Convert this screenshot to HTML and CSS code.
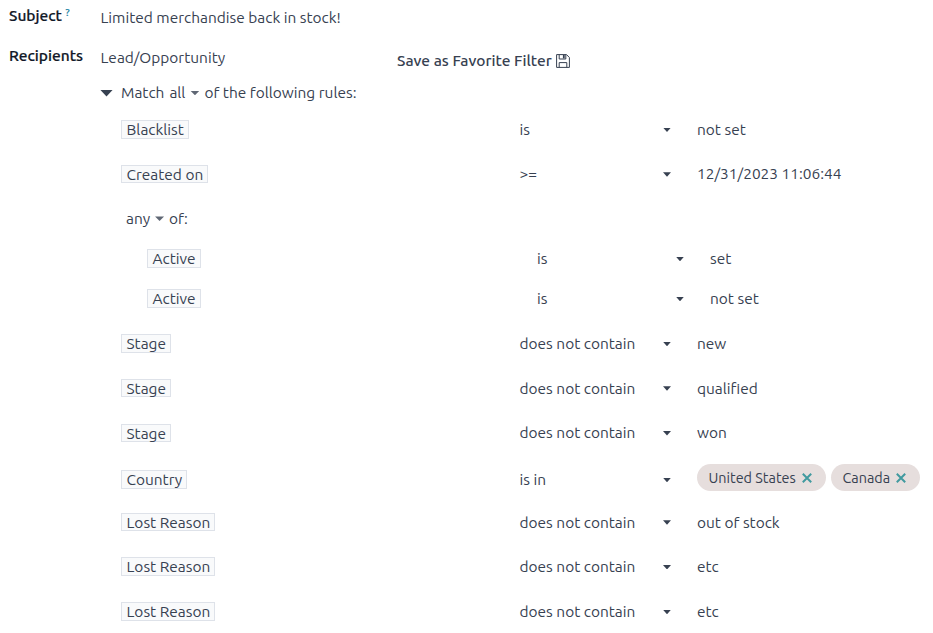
FILE: index.html
```html
<!DOCTYPE html>
<html lang="en">
<head>
<meta charset="utf-8">
<title>Mailing</title>
<link rel="stylesheet" href="styles.css">
</head>
<body>
<main class="form">
  <div class="field subject">
    <div class="label">Subject <sup class="help">?</sup></div>
    <div class="value">Limited merchandise back in stock!</div>
  </div>
  <div class="field recipients">
    <div class="label">Recipients</div>
    <div class="value">Lead/Opportunity</div>
    <div class="favorite"><span>Save as Favorite Filter</span>
      <svg class="floppy" viewBox="0 0 14 14" fill="none" stroke="currentColor"><path d="M.6 .6H10.5L13.4 3.5V13.4H.6ZM3.2 .6V5H9.8V.6M3.2 13.4V8.6H10.8V13.4"/><path d="M7.8 1V4.4" stroke-width="1.8"/></svg>
    </div>
  </div>
  <div class="match">
    <i class="caret big"></i><span>Match</span><span class="all">all</span><i class="caret mid"></i><span>of the following rules:</span>
  </div>
  <section class="rules">
    <div class="rule"><div class="path"><span class="chip">Blacklist</span></div><div class="op">is<i class="caret"></i></div><div class="val">not set</div></div>
    <div class="rule"><div class="path"><span class="chip">Created on</span></div><div class="op">&gt;=<i class="caret"></i></div><div class="val">12/31/2023 11:06:44</div></div>
    <div class="any">any<i class="caret mid"></i>of:</div>
    <div class="group">
      <div class="rule"><div class="path"><span class="chip">Active</span></div><div class="op">is<i class="caret"></i></div><div class="val">set</div></div>
      <div class="rule"><div class="path"><span class="chip">Active</span></div><div class="op">is<i class="caret"></i></div><div class="val">not set</div></div>
    </div>
    <div class="rule"><div class="path"><span class="chip">Stage</span></div><div class="op">does not contain<i class="caret"></i></div><div class="val">new</div></div>
    <div class="rule"><div class="path"><span class="chip">Stage</span></div><div class="op">does not contain<i class="caret"></i></div><div class="val">qualified</div></div>
    <div class="rule"><div class="path"><span class="chip">Stage</span></div><div class="op">does not contain<i class="caret"></i></div><div class="val">won</div></div>
    <div class="rule country"><div class="path"><span class="chip">Country</span></div><div class="op">is in<i class="caret"></i></div>
      <div class="val tags">
        <span class="tag us"><span>United States</span><svg class="x" viewBox="0 0 10 10"><path d="M.8 .8L9.2 9.2M9.2 .8L.8 9.2"/></svg></span>
        <span class="tag ca"><span>Canada</span><svg class="x" viewBox="0 0 10 10"><path d="M.8 .8L9.2 9.2M9.2 .8L.8 9.2"/></svg></span>
      </div>
    </div>
    <div class="rule"><div class="path"><span class="chip">Lost Reason</span></div><div class="op">does not contain<i class="caret"></i></div><div class="val">out of stock</div></div>
    <div class="rule"><div class="path"><span class="chip">Lost Reason</span></div><div class="op">does not contain<i class="caret"></i></div><div class="val">etc</div></div>
    <div class="rule"><div class="path"><span class="chip">Lost Reason</span></div><div class="op">does not contain<i class="caret"></i></div><div class="val">etc</div></div>
  </section>
</main>
</body>
</html>
```
FILE: styles.css
```css
* { box-sizing: border-box; }
body {
  margin: 0;
  background: #fff;
  color: #374151;
  font: 15.45px/20px Ubuntu, "Noto Sans", sans-serif;
  height: 633px;
  overflow: hidden;
}
.form { width: 933px; padding-left: 9px; }
.field { display: flex; height: 40px; }
.label { width: 91.5px; color: #111827; font-size: 15.5px; font-weight: 500; white-space: nowrap; -webkit-text-stroke: .2px; }
.subject { padding-top: 6px; }
.subject .value { padding-top: 2px; }
.recipients { padding-top: 6px; }
.recipients .value { width: 296.5px; padding-top: 2px; }
.help { font-size: 10px; line-height: 0; color: #2385a6; vertical-align: 5px; }
.favorite { display: flex; align-items: center; gap: 4px; height: 20px; margin-top: 5px; font-size: 15.5px; font-weight: 500; }
.floppy { width: 14px; height: 14px; }
.match { display: flex; align-items: center; height: 26px; margin-bottom: 1px; padding-left: 91px; white-space: nowrap; }
.caret {
  flex: none;
  width: 8px;
  height: 4.5px;
  background: currentColor;
  clip-path: polygon(0 0, 100% 0, 50% 100%);
}
.caret.big { width: 13px; height: 7px; margin: 0 8px 0 0; }
.caret.mid { width: 9px; margin: 0 5px; opacity: .8; }
.all { margin-left: 5px; }
.rule { display: grid; grid-template-columns: 398.5px 177.5px 1fr; align-items: center; height: 44.67px; padding-left: 112px; }
.op { display: flex; align-items: center; justify-content: space-between; padding: 1px 26px 0 0; white-space: nowrap; }
.val { padding-top: 1px; white-space: nowrap; }
.path { display: flex; }
.chip {
  height: 18.5px;
  padding: 0 4px 0 4.5px;
  border: 1px solid #dee2e9;
  background: #f9fafb;
  line-height: 17px;
  white-space: nowrap;
}
.any { display: flex; align-items: center; height: 42.3px; padding: 2.4px 0 0 117px; }
.group { margin-bottom: 2.5px; }
.group .rule { grid-template-columns: 390px 173px 1fr; height: 40px; padding-left: 138px; }
.country .path { padding-top: 4px; }
.country .op { padding-top: 5px; }
.tags { display: flex; gap: 5px; }
.tag { display: flex; align-items: center; gap: 6px; height: 27px; padding-left: 11.5px; border-radius: 14px; background: #e6dedd; font-size: 14.4px; }
.tag.us { width: 129px; }
.tag.ca { width: 89px; }
.x { flex: none; width: 10px; height: 10px; stroke: #419a9f; stroke-width: 2; }
```
